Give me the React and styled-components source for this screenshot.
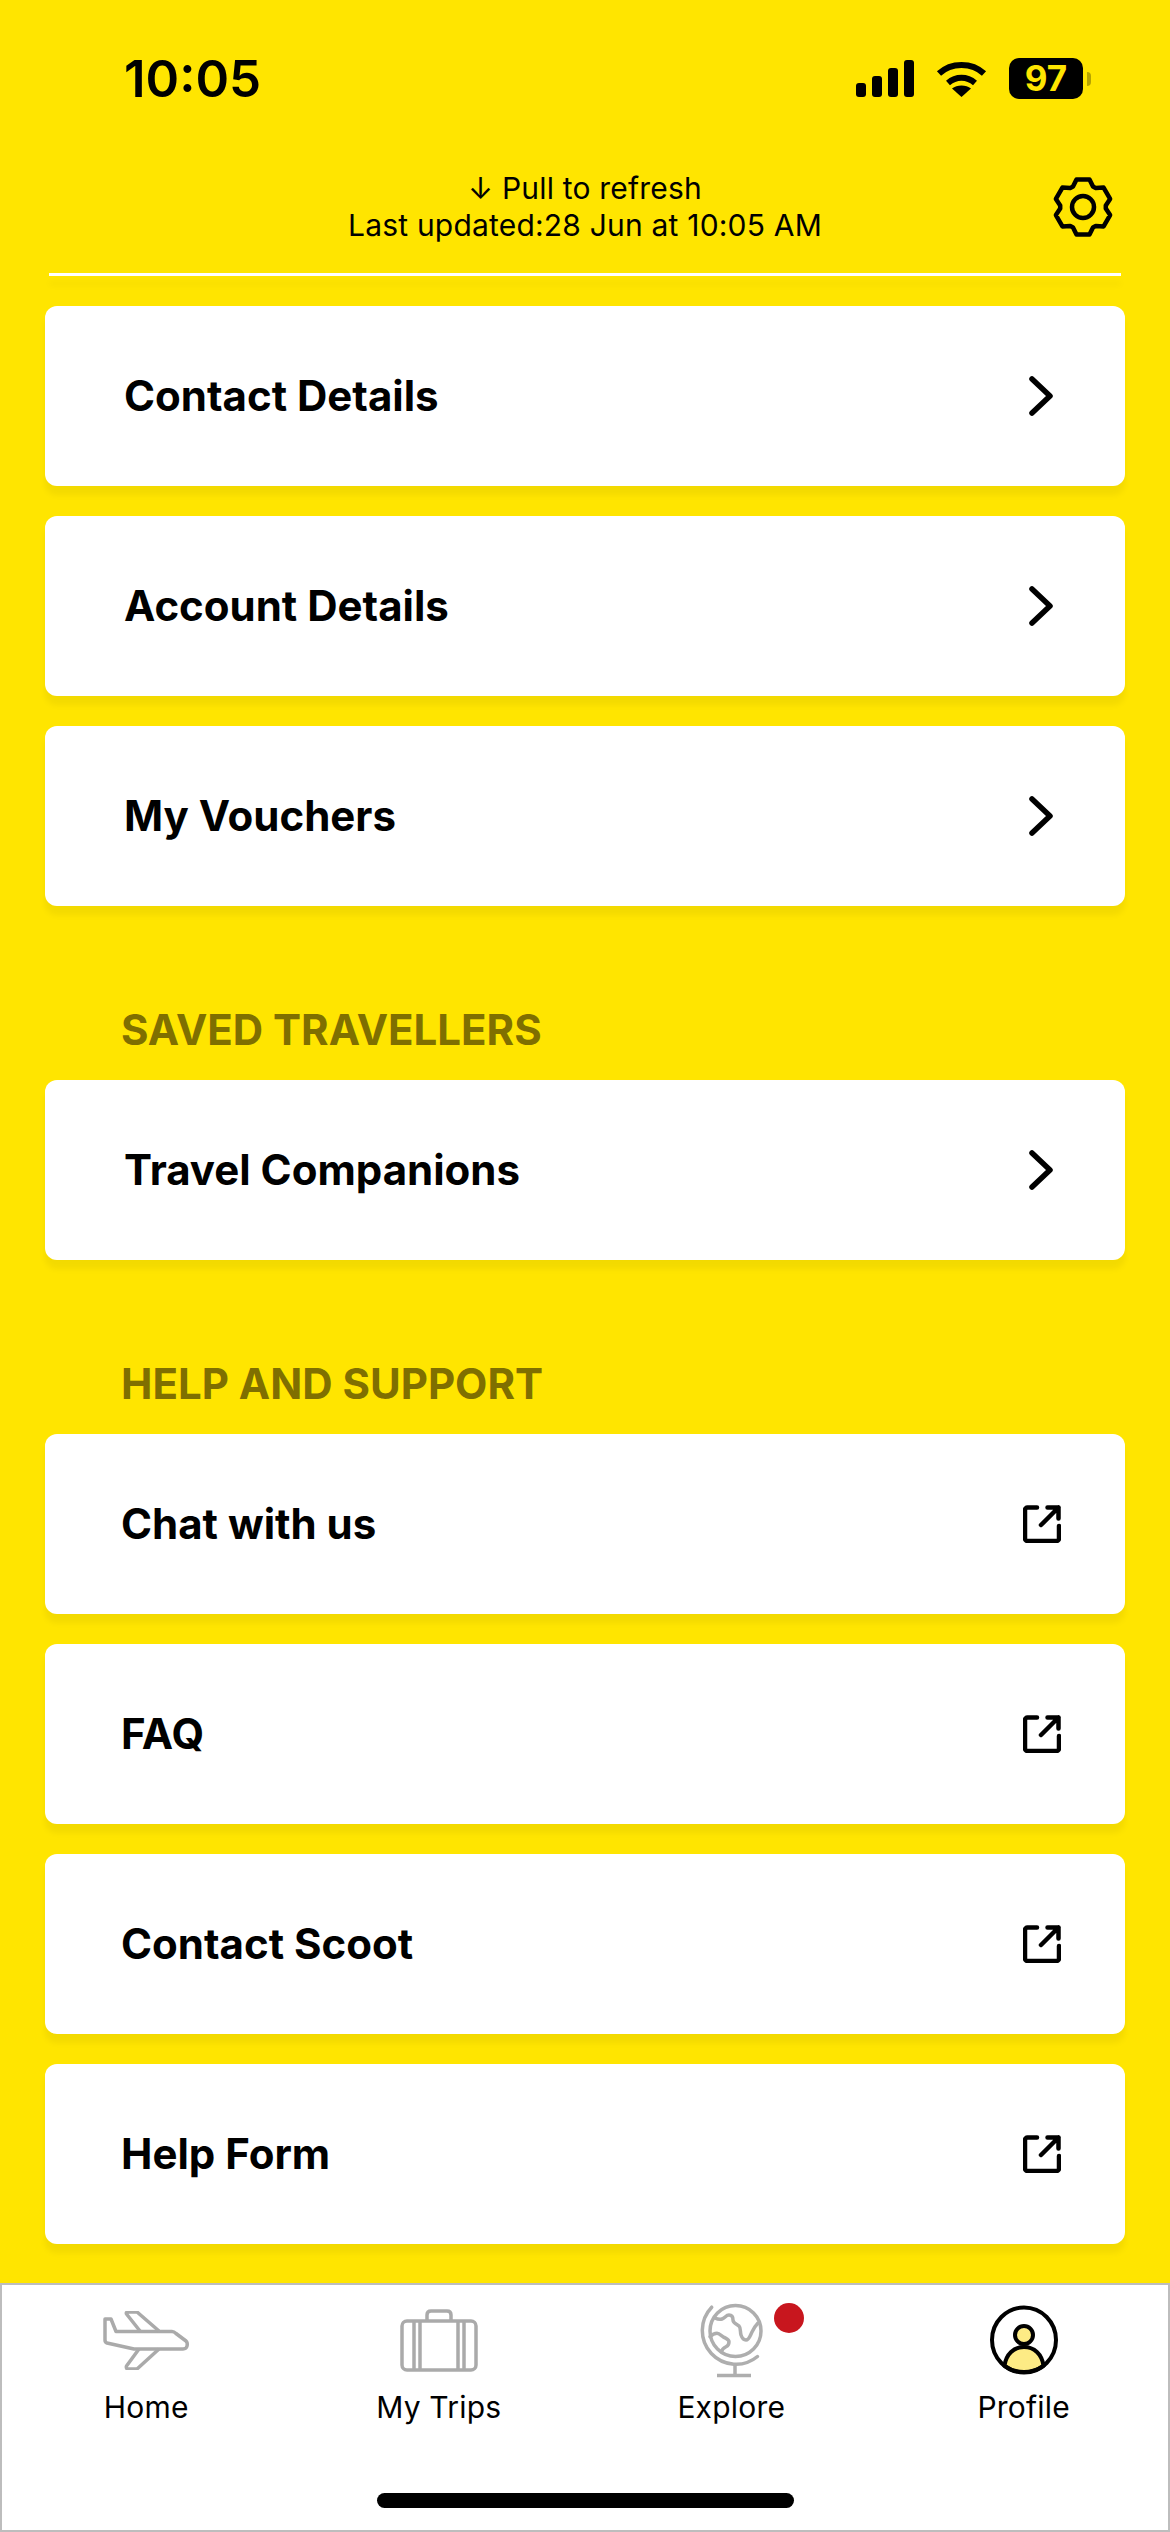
import React from "react";
import styled, { createGlobalStyle } from "styled-components";

const accountRows = ["Contact Details", "Account Details", "My Vouchers"];
const helpRows = ["Chat with us", "FAQ", "Contact Scoot", "Help Form"];

// six toothed cog, points worked out once from the tooth angles
const gearPoints = [-90, -30, 30, 90, 150, 210]
  .flatMap((deg) => {
    const a = (deg * Math.PI) / 180;
    const at = (r, t) => [
      30 + r * Math.cos(a) - t * Math.sin(a),
      30 + r * Math.sin(a) + t * Math.cos(a),
    ];
    return [at(20.5, -10), at(27.5, -6.5), at(27.5, 6.5), at(20.5, 10)];
  })
  .map((pt) => pt.map((n) => n.toFixed(1)).join(","))
  .join(" ");

function GearIcon() {
  return (
    <svg width="60" height="60" viewBox="0 0 60 60" fill="none" stroke="#000" strokeWidth="4.500" strokeLinejoin="round">
      <polygon points={gearPoints} />
      <circle cx="30" cy="30" r="11" />
    </svg>
  );
}

function Chevron() {
  return (
    <svg width="24" height="40" viewBox="0 0 24 40" fill="none" stroke="#000" strokeWidth="5.500" strokeLinecap="round" strokeLinejoin="round">
      <polyline points="3,3 21,20 3,37" />
    </svg>
  );
}

function ExternalLink() {
  return (
    <svg width="38" height="38" viewBox="0 0 38 38" fill="none" stroke="#000" strokeWidth="4.500" strokeLinecap="round" strokeLinejoin="round">
      <path d="M14 2.500H4.500a2.500 2.500 0 0 0-2.500 2.500v28.500a2.500 2.500 0 0 0 2.500 2.500h29a2.500 2.500 0 0 0 2.500-2.500V21" />
      <path d="M18 20L35.500 2.500M24.500 2.500h11V13.500" />
    </svg>
  );
}

function PlaneIcon() {
  return (
    <svg width="87" height="59" viewBox="0 0 87 59" fill="none" stroke="#aaa" strokeWidth="3.500" strokeLinejoin="round">
      <path d="M2 8h6l5 12.500h56c2 0 3 1 4 2l10 7.500c2 2 2 8-3 8H31L4 32c-1.500-.5-2-1.500-2-3z" />
      <path d="M37 20L23.500 3c-.5-1 0-2 1-2H34l22 19" />
      <path d="M36 38L23.500 55c-.5 1.500 0 3 1.500 3h9l22-20" />
    </svg>
  );
}

function SuitcaseIcon() {
  return (
    <svg width="78" height="63" viewBox="0 0 78 63" fill="none" stroke="#aaa" strokeWidth="3.500" strokeLinejoin="round">
      <rect x="2" y="12" width="74" height="49" rx="5" />
      <path d="M27 12V6c0-2.500 1.500-4 4-4h16c2.500 0 4 1.500 4 4v6" />
      <path d="M14 12v49M20 12v49M58 12v49M64 12v49" />
    </svg>
  );
}

function GlobeIcon() {
  return (
    <svg width="63" height="75" viewBox="0 0 63 75" fill="none" stroke="#aeaeae" strokeWidth="3.500" strokeLinecap="round" strokeLinejoin="round">
      <circle cx="35.500" cy="28" r="25.500" />
      <path d="M11.700 4.200A33.700 33.700 0 0 0 57.500 53.500" />
      <path d="M35 61v11M17 72.500h34" strokeLinecap="butt" />
      <path d="M15 15c2 1 4 2 7 1 3-1 4-4 7-4 3 0 4 2 4 5 0 3 3 4 6 6 2 2 1 6 2 9 1 3 3 5 5 5 3 0 4-4 6-8 2-4 4-7 6-9" />
      <path d="M10 33.700c2-2 4-3.500 7-3.500 2 0 4 2 6 3.500 3 2 6 2.500 6 5 0 2-1 4-3 5-2 1-4 2-4.500 5" />
    </svg>
  );
}

function ProfileIcon() {
  return (
    <svg width="70" height="72" viewBox="0 0 70 72" fill="none" stroke="#000" strokeWidth="4">
      <path d="M15.500 61.800C17 50 25 43 35 43S53 50 54.500 61.800C43 70 27 70 15.500 61.800z" fill="#fdeb85" />
      <circle cx="35" cy="31" r="9" fill="#fdeb85" />
      <ellipse cx="35" cy="36" rx="32" ry="32.500" />
    </svg>
  );
}

function SignalIcon() {
  return (
    <svg width="58" height="37" viewBox="0 0 58 37" fill="#000">
      <rect x="0" y="23" width="10" height="14" rx="3" />
      <rect x="16" y="16" width="10" height="21" rx="3" />
      <rect x="32" y="8" width="10" height="29" rx="3" />
      <rect x="48" y="0" width="10" height="37" rx="3" />
    </svg>
  );
}

function WifiIcon() {
  return (
    <svg width="51" height="37" viewBox="0 0 51 37">
      <path d="M3 13.500C15 2 36 2 48 13.500" fill="none" stroke="#000" strokeWidth="6" />
      <path d="M12 23c8-7 19-7 27 0" fill="none" stroke="#000" strokeWidth="6" />
      <path d="M25.500 37L16 28.500c5-4 14-4 19 0z" fill="#000" />
    </svg>
  );
}

function App() {
  return (
    <Page>
      <GlobalStyle />
      <StatusBar>
        <Time>10:05</Time>
        <StatusIcons>
          <SignalIcon />
          <WifiIcon />
          <Battery>
            <BatteryLevel>97</BatteryLevel>
            <BatteryCap />
          </Battery>
        </StatusIcons>
      </StatusBar>
      <RefreshHeader>
        <RefreshText>
          <div>↓ Pull to refresh</div>
          <div>Last updated:28 Jun at 10:05 AM</div>
        </RefreshText>
        <GearButton>
          <GearIcon />
        </GearButton>
      </RefreshHeader>
      <Content>
        <CardList>
          <ScrolledCardEdge />
          {accountRows.map((label) => (
            <Card key={label}>
              <CardLabel>{label}</CardLabel>
              <Chevron />
            </Card>
          ))}
        </CardList>
        <SectionTitle>SAVED TRAVELLERS</SectionTitle>
        <CardList>
          <Card>
            <CardLabel>Travel Companions</CardLabel>
            <Chevron />
          </Card>
        </CardList>
        <SectionTitle>HELP AND SUPPORT</SectionTitle>
        <CardList>
          {helpRows.map((label) => (
            <Card key={label} $external>
              <CardLabel>{label}</CardLabel>
              <ExternalLink />
            </Card>
          ))}
        </CardList>
      </Content>
      <TabBar>
        <Tabs>
          <Tab>
            <TabIcon><PlaneIcon /></TabIcon>
            <TabLabel>Home</TabLabel>
          </Tab>
          <Tab>
            <TabIcon><SuitcaseIcon /></TabIcon>
            <TabLabel>My Trips</TabLabel>
          </Tab>
          <Tab>
            <TabIcon>
              <GlobeIcon />
              <RedDot />
            </TabIcon>
            <TabLabel>Explore</TabLabel>
          </Tab>
          <Tab>
            <TabIcon><ProfileIcon /></TabIcon>
            <TabLabel>Profile</TabLabel>
          </Tab>
        </Tabs>
        <HomeIndicator />
      </TabBar>
    </Page>
  );
}

const GlobalStyle = createGlobalStyle`
  html, body {
    margin: 0;
    padding: 0;
    background: #ffe500;
  }
  * {
    box-sizing: border-box;
  }
`;

const Page = styled.div`
  width: 1170px;
  height: 2532px;
  display: flex;
  flex-direction: column;
  background: #ffe500;
  color: #000;
  font-family: Inter, "Liberation Sans", sans-serif;
  overflow: hidden;
`;

const StatusBar = styled.div`
  height: 157px;
  flex: none;
  display: flex;
  align-items: center;
  justify-content: space-between;
  padding: 0 79px 0 124px;
`;

const Time = styled.div`
  font-size: 51px;
  font-weight: 600;
`;

const StatusIcons = styled.div`
  display: flex;
  align-items: center;
  gap: 22px;
`;

const Battery = styled.div`
  display: flex;
  align-items: center;
  gap: 4px;
`;

const BatteryLevel = styled.div`
  width: 74px;
  height: 41px;
  border-radius: 10px;
  background: #000;
  color: #ffe500;
  font-size: 35px;
  font-weight: 700;
  line-height: 41px;
  text-align: center;
`;

const BatteryCap = styled.div`
  width: 4px;
  height: 14px;
  border-radius: 0 4px 4px 0;
  background: #b5a300;
`;

const RefreshHeader = styled.div`
  margin-top: 13px;
  height: 74px;
  flex: none;
  display: grid;
  grid-template-columns: 1fr auto 1fr;
  align-items: center;
  padding: 0 57px;
`;

const RefreshText = styled.div`
  grid-column: 2;
  font-size: 30px;
  line-height: 37px;
  text-align: center;
  letter-spacing: 0.2px;
`;

const GearButton = styled.div`
  grid-column: 3;
  justify-self: end;
  display: flex;
`;

const Content = styled.div`
  flex: 1;
  margin-top: 29px;
  padding: 0 45px;
  display: flex;
  flex-direction: column;
`;

const CardList = styled.div`
  display: flex;
  flex-direction: column;
  gap: 30px;
`;

const ScrolledCardEdge = styled.div`
  height: 3px;
  margin: 0 4px;
  background: #fff;
  box-shadow: 0 9px 6px rgba(0, 0, 0, 0.05);
`;

const Card = styled.div`
  height: 180px;
  display: flex;
  align-items: center;
  justify-content: space-between;
  padding: ${(p) => (p.$external ? "0 64px 0 76px" : "0 72px 0 79px")};
  background: #fff;
  border-radius: 12px;
  box-shadow: 0 9px 6px rgba(0, 0, 0, 0.05);
`;

const CardLabel = styled.div`
  padding-bottom: 2px;
  font-size: 42px;
  font-weight: 700;
`;

const SectionTitle = styled.div`
  padding: 96px 0 0 76px;
  height: 174px;
  font-size: 42px;
  line-height: 56px;
  font-weight: 700;
  color: #7f6f00;
`;

const TabBar = styled.div`
  height: 249px;
  flex: none;
  display: flex;
  flex-direction: column;
  align-items: center;
  justify-content: space-between;
  padding: 17px 0 22px;
  background: #fff;
  border: 2px solid #bdbdbd;
`;

const Tabs = styled.div`
  width: calc(100% + 4px);
  flex: none;
  display: grid;
  grid-template-columns: repeat(4, 1fr);
`;

const Tab = styled.div`
  display: flex;
  flex-direction: column;
  align-items: center;
  gap: 11px;
`;

const TabIcon = styled.div`
  position: relative;
  height: 76px;
  display: flex;
  align-items: center;
`;

const RedDot = styled.span`
  position: absolute;
  top: 1px;
  right: -41px;
  width: 30px;
  height: 30px;
  border-radius: 50%;
  background: #c8161e;
`;

const TabLabel = styled.div`
  font-size: 30px;
  line-height: 36px;
  letter-spacing: 0.2px;
`;

const HomeIndicator = styled.div`
  width: 417px;
  height: 15px;
  border-radius: 8px;
  background: #000;
`;

export default App;
